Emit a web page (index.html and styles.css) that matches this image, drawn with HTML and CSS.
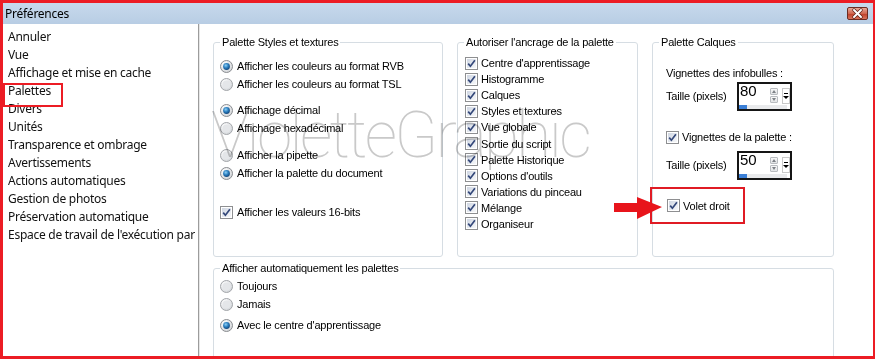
FILE: index.html
```html
<!DOCTYPE html>
<html lang="fr">
<head>
  <meta charset="UTF-8">
  <meta name="viewport" content="width=device-width, initial-scale=1.0">
  <title>Préférences</title>
  <link rel="stylesheet" href="styles.css">
</head>
<body>

<!-- shared glyphs for the checkboxes and radio buttons -->
<svg class="defs" width="0" height="0" aria-hidden="true">
  <defs>
    <linearGradient id="boxFill" x1="0" y1="0" x2="1" y2="1">
      <stop offset="0" stop-color="#cfd6e2"/>
      <stop offset="1" stop-color="#f7f8fa"/>
    </linearGradient>
    <radialGradient id="radioFill" cx="0.35" cy="0.3" r="0.8">
      <stop offset="0" stop-color="#ffffff"/>
      <stop offset="1" stop-color="#cfd2d6"/>
    </radialGradient>
    <radialGradient id="dotFill" cx="0.4" cy="0.35" r="0.7">
      <stop offset="0" stop-color="#8fd0f5"/>
      <stop offset="0.5" stop-color="#2b7fc0"/>
      <stop offset="1" stop-color="#0f3f73"/>
    </radialGradient>
    <symbol id="check" viewBox="0 0 13 13">
      <rect x="0.5" y="0.5" width="12" height="12" fill="#fff" stroke="#8e8f91"/>
      <rect x="2" y="2" width="9" height="9" fill="url(#boxFill)"/>
      <path d="M3.2 6.6 L5.4 9.2 L9.9 3.2" fill="none" stroke="#34487a" stroke-width="1.7"/>
    </symbol>
    <symbol id="radio-on" viewBox="0 0 13 13">
      <circle cx="6.5" cy="6.5" r="6" fill="url(#radioFill)" stroke="#8a8d91"/>
      <circle cx="6.5" cy="6.5" r="3.4" fill="url(#dotFill)"/>
    </symbol>
    <symbol id="radio-off" viewBox="0 0 13 13">
      <circle cx="6.5" cy="6.5" r="6" fill="url(#radioFill)" stroke="#a3a6aa"/>
      <circle cx="6.5" cy="6.5" r="4" fill="#e4e6e9"/>
    </symbol>
  </defs>
</svg>

<div class="window">
  <div class="titlebar">
    <span class="title">Préférences</span>
    <span class="close">
      <svg width="21" height="13" viewBox="0 0 21 13">
        <path d="M7 3 L14 10 M14 3 L7 10" stroke="#5a2218" stroke-width="3.4" stroke-linecap="round"/>
        <path d="M7 3 L14 10 M14 3 L7 10" stroke="#fff" stroke-width="2" stroke-linecap="round"/>
      </svg>
    </span>
  </div>

  <div class="main">
    <!-- category list -->
    <ul class="nav">
      <li>Annuler</li>
      <li>Vue</li>
      <li>Affichage et mise en cache</li>
      <li class="marked">Palettes</li>
      <li>Divers</li>
      <li>Unités</li>
      <li>Transparence et ombrage</li>
      <li>Avertissements</li>
      <li>Actions automatiques</li>
      <li>Gestion de photos</li>
      <li>Préservation automatique</li>
      <li>Espace de travail de l'exécution par défaut</li>
    </ul>

    <div class="content">
      <div class="row">
        <fieldset class="group g-styles">
          <legend>Palette Styles et textures</legend>
          <div class="opts first">
            <div class="opt"><svg class="ctl"><use href="#radio-on"/></svg>Afficher les couleurs au format RVB</div>
            <div class="opt"><svg class="ctl"><use href="#radio-off"/></svg>Afficher les couleurs au format TSL</div>
          </div>
          <div class="opts">
            <div class="opt"><svg class="ctl"><use href="#radio-on"/></svg>Affichage décimal</div>
            <div class="opt"><svg class="ctl"><use href="#radio-off"/></svg>Affichage hexadécimal</div>
          </div>
          <div class="opts gap9">
            <div class="opt"><svg class="ctl"><use href="#radio-off"/></svg>Afficher la pipette</div>
            <div class="opt"><svg class="ctl"><use href="#radio-on"/></svg>Afficher la palette du document</div>
          </div>
          <div class="opts gap21">
            <div class="opt"><svg class="ctl"><use href="#check"/></svg>Afficher les valeurs 16-bits</div>
          </div>
        </fieldset>

        <fieldset class="group g-dock">
          <legend>Autoriser l'ancrage de la palette</legend>
          <div class="checks">
            <div class="chk"><svg class="ctl"><use href="#check"/></svg>Centre d'apprentissage</div>
            <div class="chk"><svg class="ctl"><use href="#check"/></svg>Histogramme</div>
            <div class="chk"><svg class="ctl"><use href="#check"/></svg>Calques</div>
            <div class="chk"><svg class="ctl"><use href="#check"/></svg>Styles et textures</div>
            <div class="chk"><svg class="ctl"><use href="#check"/></svg>Vue globale</div>
            <div class="chk"><svg class="ctl"><use href="#check"/></svg>Sortie du script</div>
            <div class="chk"><svg class="ctl"><use href="#check"/></svg>Palette Historique</div>
            <div class="chk"><svg class="ctl"><use href="#check"/></svg>Options d'outils</div>
            <div class="chk"><svg class="ctl"><use href="#check"/></svg>Variations du pinceau</div>
            <div class="chk"><svg class="ctl"><use href="#check"/></svg>Mélange</div>
            <div class="chk"><svg class="ctl"><use href="#check"/></svg>Organiseur</div>
          </div>
        </fieldset>

        <fieldset class="group g-layers">
          <legend>Palette Calques</legend>
          <div class="layers">
            <div class="line tips">Vignettes des infobulles :</div>
            <div class="size-row">
              <span class="size-label">Taille (pixels)</span>
              <div class="spin">
                <span class="spin-val">80</span>
                <span class="spin-arrows"><i class="up"></i><i class="down"></i></span>
                <span class="spin-drop"></span>
                <span class="spin-bar"><b style="width:8px"></b></span>
              </div>
            </div>
            <div class="line thumbs"><svg class="ctl"><use href="#check"/></svg>Vignettes de la palette :</div>
            <div class="size-row second">
              <span class="size-label">Taille (pixels)</span>
              <div class="spin">
                <span class="spin-val">50</span>
                <span class="spin-arrows"><i class="up"></i><i class="down"></i></span>
                <span class="spin-drop"></span>
                <span class="spin-bar"><b style="width:8px"></b></span>
              </div>
            </div>
            <div class="volet"><svg class="ctl"><use href="#check"/></svg>Volet droit</div>
          </div>
        </fieldset>
      </div>

      <fieldset class="group g-auto">
        <legend>Afficher automatiquement les palettes</legend>
        <div class="opt a1"><svg class="ctl"><use href="#radio-off"/></svg>Toujours</div>
        <div class="opt"><svg class="ctl"><use href="#radio-off"/></svg>Jamais</div>
        <div class="opt a3"><svg class="ctl"><use href="#radio-on"/></svg>Avec le centre d'apprentissage</div>
      </fieldset>

      <!-- watermark laid over the settings -->
      <div class="watermark">VioletteGraphic</div>
    </div>
  </div>

  <!-- red arrow pointing at "Volet droit" -->
  <svg class="arrow" width="50" height="24" viewBox="0 0 50 24">
    <path d="M0 7 H23 V1 L48 11 L23 23 V16 H0 Z" fill="#e8141b"/>
  </svg>
</div>

</body>
</html>
```

FILE: styles.css
```css
/* Dialog frame */
* {
  box-sizing: border-box;
}

body {
  margin: 0;
  background: #fff;
}

.defs {
  position: absolute;
}

.window {
  position: relative;
  width: 875px;
  height: 359px;
  border: 3px solid #ec1c24;
  border-right-width: 2px;
  overflow: hidden;
  background: #fff;
}

.titlebar {
  height: 21px;
  display: flex;
  align-items: center;
  justify-content: space-between;
  padding: 0 5px 0 2px;
  background: linear-gradient(#c7d9ec, #b8cde4);
  font-family: "Noto Sans", sans-serif;
  font-size: 12px;
  letter-spacing: -0.25px;
  color: #000;
}

.close {
  display: flex;
  width: 21px;
  height: 13px;
  border: 1px solid #6b2c22;
  border-radius: 2px;
  background: linear-gradient(#e9a898, #d0674f 50%, #c0412a 55%, #d9735a);
}

.close svg {
  margin: -1px;
}

.main {
  display: flex;
  height: 332px;
}

/* Category list */
.nav {
  width: 196px;
  margin: 0;
  padding: 4px 0 0 5px;
  list-style: none;
  border-right: 1px solid #9c9c9c;
  box-shadow: 1px 0 0 #e6e6e6;
  font-family: "Noto Sans", sans-serif;
  font-size: 12px;
  letter-spacing: -0.27px;
  color: #111;
  white-space: nowrap;
  overflow: hidden;
}

.nav li {
  height: 18px;
  line-height: 18px;
}

.nav .marked {
  position: relative;
}

.nav .marked::after {
  content: "";
  position: absolute;
  left: -5px;
  top: 1px;
  width: 56px;
  height: 20px;
  border: 2px solid #ec1c24;
}

/* Settings area */
.content {
  position: relative;
  flex: 1;
  padding: 11px 0 0 14px;
  font-family: "Liberation Sans", Arial, sans-serif;
  font-size: 11px;
  letter-spacing: -0.2px;
  color: #000;
}

.watermark {
  position: absolute;
  z-index: 3;
  left: 12px;
  top: 74px;
  font-family: Roboto, "Liberation Sans", sans-serif;
  font-weight: 100;
  font-size: 64px;
  line-height: 76px;
  letter-spacing: -2.7px;
  color: #c9c9c9;
  mix-blend-mode: multiply;
  white-space: nowrap;
  pointer-events: none;
}

.row {
  display: flex;
  gap: 14px;
  height: 222px;
}

.group {
  position: relative;
  margin: 0;
  padding: 0 6px;
  border: 1px solid #d6dde3;
  border-radius: 3px;
  min-width: 0;
}

.group legend {
  padding: 0 2px;
  line-height: 14px;
}

.g-styles {
  width: 230px;
}

.g-dock {
  width: 181px;
}

.g-layers {
  width: 182px;
}

.ctl {
  width: 13px;
  height: 13px;
  flex: none;
  margin-right: 4px;
}

.opts {
  margin-top: 8px;
}

.opts.gap9 {
  margin-top: 9px;
}

.opts.gap21 {
  margin-top: 21px;
}

.opt {
  display: flex;
  align-items: center;
  height: 18px;
}

/* Docking checkboxes */
.checks {
  padding: 6px 0 0 1px;
}

.chk {
  display: flex;
  align-items: center;
  height: 16.1px;
}

.chk .ctl {
  margin-right: 3px;
}

/* Layers palette */
.layers {
  padding-left: 7px;
}

.line {
  display: flex;
  align-items: center;
  height: 18px;
}

.tips {
  margin-top: 15px;
}

.thumbs {
  margin-top: 17px;
}

.thumbs .ctl {
  margin-right: 3px;
}

.size-row {
  display: flex;
  align-items: center;
  height: 29px;
}

.size-row.second {
  margin-top: 5px;
}

.size-label {
  width: 71px;
  margin-top: -2px;
}

.spin {
  display: grid;
  grid-template-columns: 31px 9px 3px 8px;
  grid-template-rows: 21px 4px;
  width: 55px;
  height: 29px;
  border: 2px solid #151515;
  background: #fff;
}

.spin-val {
  font-size: 15px;
  letter-spacing: 0;
  line-height: 14px;
  padding: 0 0 0 1px;
}

.spin-arrows {
  display: flex;
  flex-direction: column;
  gap: 1px;
  margin-top: 4px;
}

.spin-arrows i {
  display: block;
  width: 8px;
  height: 7px;
  border: 1px solid #b9bcc0;
  border-radius: 1px;
  background: linear-gradient(#f7f7f7, #e2e4e6);
  position: relative;
}

.spin-arrows i::after {
  content: "";
  position: absolute;
  left: 1px;
  top: 1px;
  border-left: 2px solid transparent;
  border-right: 2px solid transparent;
}

.spin-arrows .up::after {
  border-bottom: 3px solid #7e8287;
}

.spin-arrows .down::after {
  border-top: 3px solid #7e8287;
}

.spin-drop {
  grid-column: 4;
  margin-top: 4px;
  height: 16px;
  border: 1px solid #c9c9c9;
  background: #fff;
  position: relative;
}

.spin-drop::before {
  content: "";
  position: absolute;
  left: 1px;
  top: 4px;
  width: 4px;
  height: 1px;
  background: #000;
}

.spin-drop::after {
  content: "";
  position: absolute;
  left: 0;
  top: 7px;
  border-left: 3px solid transparent;
  border-right: 3px solid transparent;
  border-top: 3px solid #000;
}

.spin-bar {
  grid-column: 1 / -1;
  margin-right: 3px;
  background: #e9eaec;
}

.spin-bar b {
  display: block;
  height: 100%;
  background: #3b7fd6;
}

.volet {
  display: flex;
  align-items: center;
  width: 95px;
  height: 37px;
  margin: 7px 0 0 -16px;
  padding-left: 15px;
  border: 2px solid #e01b24;
}

.volet .ctl {
  margin-right: 3px;
}

/* Auto display palettes */
.g-auto {
  width: 621px;
  height: 120px;
  margin-top: 4px;
}

.g-auto .a1 {
  margin-top: 2px;
}

.g-auto .a3 {
  margin-top: 3px;
}

.arrow {
  position: absolute;
  left: 611px;
  top: 193px;
}
```
